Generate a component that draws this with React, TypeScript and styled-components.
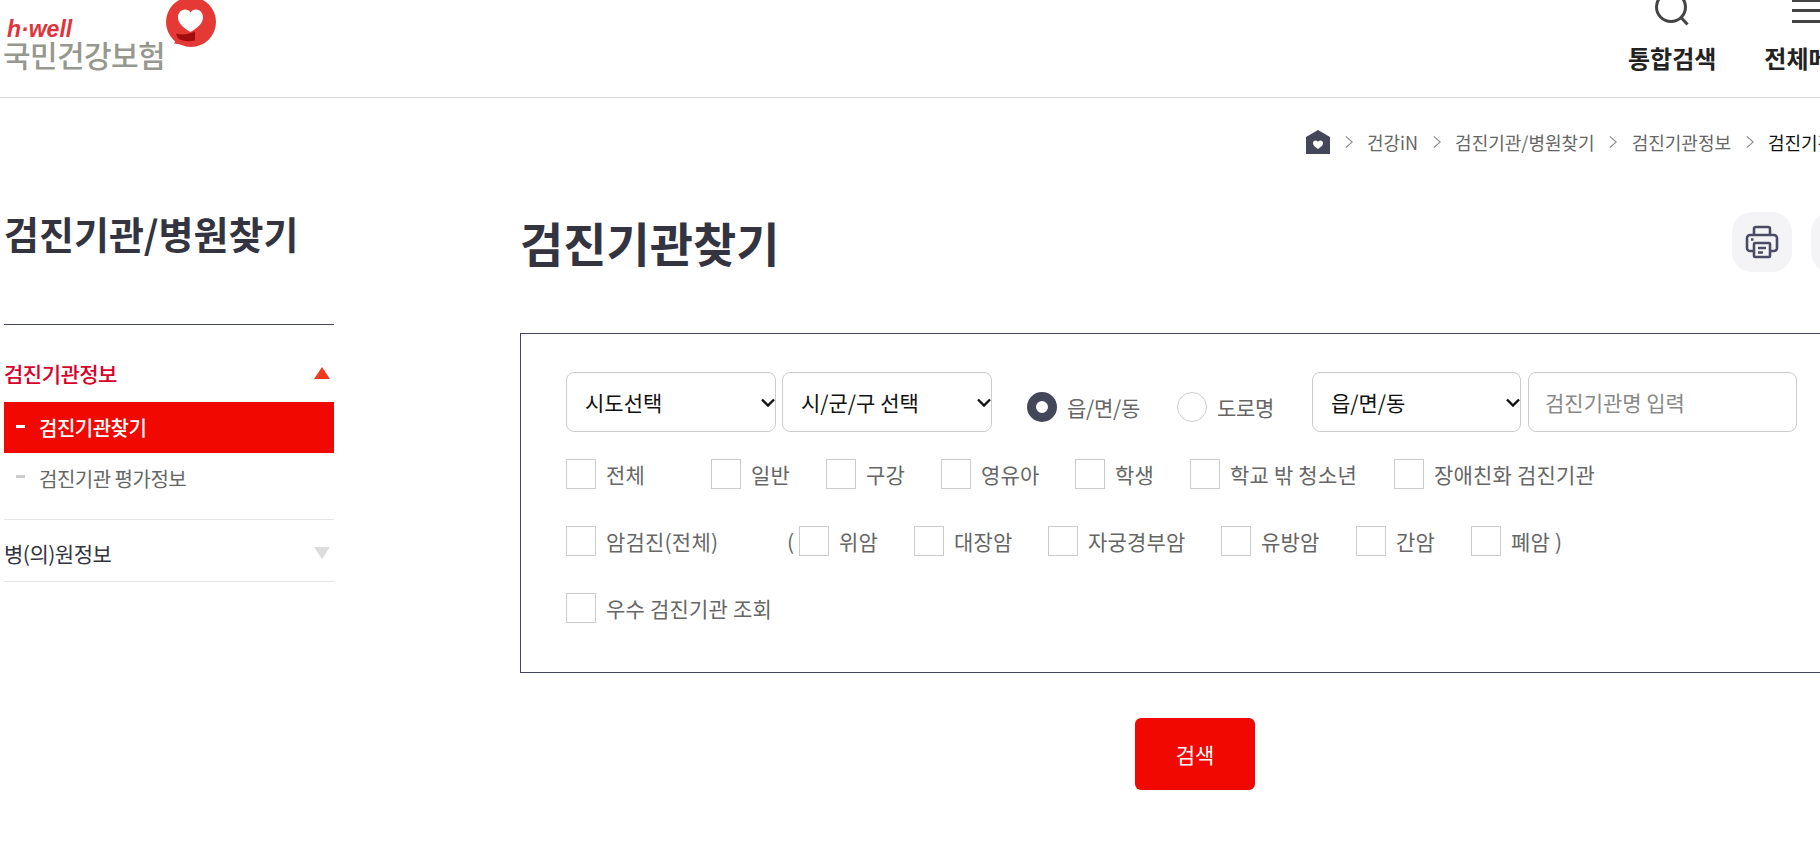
import React from "react";
import styled, { createGlobalStyle } from "styled-components";

const Global = createGlobalStyle`
  html, body {
    margin: 0;
    padding: 0;
    width: 1820px;
    height: 841px;
    overflow: hidden;
    background: #fff;
  }
  body, input, select, button {
    font-family: "Noto Sans CJK KR", "Noto Sans", sans-serif;
  }
  * {
    box-sizing: border-box;
  }
`;

const row1 = [
  { label: "전체", width: 145 },
  { label: "일반", width: 115 },
  { label: "구강", width: 115 },
  { label: "영유아", width: 134 },
  { label: "학생", width: 115 },
  { label: "학교 밖 청소년", width: 204 },
  { label: "장애친화 검진기관" },
];

const row2 = [
  { label: "위암", width: 115 },
  { label: "대장암", width: 134 },
  { label: "자궁경부암", width: 173 },
  { label: "유방암", width: 135 },
  { label: "간암", width: 115 },
  { label: "폐암 )" },
];

const crumbs = ["건강iN", "검진기관/병원찾기", "검진기관정보"];

const selectArrow =
  "data:image/svg+xml,%3Csvg xmlns='http://www.w3.org/2000/svg' width='14' height='9' fill='none' stroke='%23111' stroke-width='2.4'%3E%3Cpath d='M1 1.500l6 6 6-6'/%3E%3C/svg%3E";

const CheckOption = ({ label, width }: { label: string; width?: number }) => (
  <Option $width={width}>
    <CheckBox type="checkbox" />
    <span>{label}</span>
  </Option>
);

const App = () => {
  return (
    <Page>
      <Global />
      <Header>
        <Logo>
          <LogoEn>h·well</LogoEn>
          <LogoKo>국민건강보험</LogoKo>
          <LogoMark viewBox="0 0 50 50" aria-hidden="true">
            <circle cx="25" cy="25" r="25" fill="#e53935" />
            <path d="M13 38L8 46.500c6 1 12 1.500 18 .5z" fill="#e53935" />
            <path
              d="M24.500 35c-8-4.500-12.500-9-12.500-15 0-4.500 3.500-7.500 7-7.500 2.500 0 4.500 1 5.500 3 1-2 3-3 5.500-3 3.500 0 7 3 7 7.500 0 6-4.500 10.500-12.500 15z"
              fill="#fff"
            />
            <path d="M10 36.500c6 2 12 1 19-2v9c-7 1.500-13 .5-17-2z" fill="#a00d0d" />
          </LogoMark>
        </Logo>
        <Tools>
          <Tool>
            <ToolIcon viewBox="0 0 36 36" aria-hidden="true">
              <circle cx="17" cy="17" r="14.500" />
              <path d="M27.500 28l6 6.500" />
            </ToolIcon>
            <ToolLabel>통합검색</ToolLabel>
          </Tool>
          <Tool>
            <ToolIcon viewBox="0 0 36 36" aria-hidden="true">
              <path d="M2 10.500h32M2 20.500h32M2 31.500h32" />
            </ToolIcon>
            <ToolLabel>전체메뉴</ToolLabel>
          </Tool>
        </Tools>
      </Header>

      <Breadcrumb>
        <HomeIcon viewBox="0 0 24 24" aria-hidden="true">
          <path d="M12 0l12 7v17H0V7z" fill="#44465a" />
          <path
            d="M12 19c-3-2-5-3.500-5-6 0-1.500 1.200-2.500 2.500-2.500 1 0 2 .5 2.500 1.500.5-1 1.500-1.500 2.500-1.500 1.300 0 2.500 1 2.500 2.500 0 2.500-2 4-5 6z"
            fill="#fff"
          />
        </HomeIcon>
        {crumbs.map((crumb) => (
          <React.Fragment key={crumb}>
            <Chevron viewBox="0 0 10 16" aria-hidden="true">
              <path d="M1 1l8 7-8 7" />
            </Chevron>
            <Crumb>{crumb}</Crumb>
          </React.Fragment>
        ))}
        <Chevron viewBox="0 0 10 16" aria-hidden="true">
          <path d="M1 1l8 7-8 7" />
        </Chevron>
        <Crumb $current>검진기관찾기</Crumb>
      </Breadcrumb>

      <Body>
        <Sidebar>
          <SideTitle>검진기관/병원찾기</SideTitle>
          <SideHead $open>
            검진기관정보
            <Arrow $open />
          </SideHead>
          <SubItem $active>검진기관찾기</SubItem>
          <SubItem>검진기관 평가정보</SubItem>
          <SideHead>
            병(의)원정보
            <Arrow />
          </SideHead>
        </Sidebar>

        <Main>
          <TitleRow>
            <PageTitle>검진기관찾기</PageTitle>
            <TitleActions>
              <RoundButton type="button" aria-label="인쇄">
                <svg width="34" height="34" viewBox="0 0 34 34" fill="none" stroke="#4a4c63" strokeWidth="2.600">
                  <path d="M9 10V4a2 2 0 0 1 2-2h12a2 2 0 0 1 2 2v6" />
                  <path d="M9 26H5a3 3 0 0 1-3-3V13a3 3 0 0 1 3-3h24a3 3 0 0 1 3 3v10a3 3 0 0 1-3 3h-4" />
                  <rect x="9" y="18" width="16" height="14" rx="1" />
                  <path d="M13 23h8M13 27.500h5M6 14.500h2.500" />
                </svg>
              </RoundButton>
              <RoundButton type="button" aria-label="공유" />
            </TitleActions>
          </TitleRow>

          <Panel>
            <SearchRow>
              <SelectBox $width={210} defaultValue="시도선택">
                <option>시도선택</option>
              </SelectBox>
              <SelectBox $width={210} defaultValue="시/군/구 선택">
                <option>시/군/구 선택</option>
              </SelectBox>
              <RadioGroup>
                <RadioOption>
                  <RadioDot type="radio" name="addr" defaultChecked />
                  <span>읍/면/동</span>
                </RadioOption>
                <RadioOption>
                  <RadioDot type="radio" name="addr" />
                  <span>도로명</span>
                </RadioOption>
              </RadioGroup>
              <SelectBox $width={209} defaultValue="읍/면/동">
                <option>읍/면/동</option>
              </SelectBox>
              <NameInput type="text" placeholder="검진기관명 입력" />
            </SearchRow>

            <CheckRow>
              {row1.map((item) => (
                <CheckOption key={item.label} {...item} />
              ))}
            </CheckRow>

            <CheckRow>
              <CheckOption label="암검진(전체)" width={221} />
              <Paren>(</Paren>
              {row2.map((item) => (
                <CheckOption key={item.label} {...item} />
              ))}
            </CheckRow>

            <CheckRow>
              <CheckOption label="우수 검진기관 조회" />
            </CheckRow>
          </Panel>

          <ButtonRow>
            <SearchButton type="button">검색</SearchButton>
          </ButtonRow>
        </Main>
      </Body>
    </Page>
  );
};

export default App;

const Page = styled.div`
  width: 1820px;
  height: 841px;
  overflow: hidden;
`;

const Header = styled.header`
  display: flex;
  height: 98px;
  border-bottom: 1px solid #d8d8d8;
  overflow: hidden;
`;

const Logo = styled.div`
  position: relative;
  flex: 0 0 1628px;
  padding: 18px 0 0 3px;
`;

const LogoEn = styled.div`
  margin-left: 4px;
  font-family: "Liberation Sans", sans-serif;
  font-size: 23px;
  line-height: 22px;
  font-weight: 700;
  font-style: italic;
  color: #e0343a;
`;

const LogoKo = styled.div`
  margin-top: 0;
  font-size: 30px;
  line-height: 28px;
  font-weight: 500;
  letter-spacing: -0.600px;
  color: #96988f;
`;

const LogoMark = styled.svg`
  position: absolute;
  left: 166px;
  top: -3px;
  width: 50px;
  height: 50px;
`;

const Tools = styled.div`
  display: flex;
  flex: none;
  gap: 48px;
`;

const Tool = styled.div`
  display: flex;
  flex-direction: column;
  align-items: center;
`;

const ToolIcon = styled.svg`
  width: 36px;
  height: 36px;
  margin-top: -10px;
  fill: none;
  stroke: #444;
  stroke-width: 3;
`;

const ToolLabel = styled.div`
  margin-top: 15px;
  font-size: 24px;
  line-height: 34px;
  font-weight: 700;
  color: #222;
`;

const Breadcrumb = styled.nav`
  display: flex;
  align-items: center;
  height: 50px;
  margin-top: 19px;
  padding-left: 1306px;
  white-space: nowrap;
`;

const HomeIcon = styled.svg`
  flex: none;
  width: 24px;
  height: 24px;
`;

const Chevron = styled.svg`
  flex: none;
  width: 8px;
  height: 14px;
  margin: 0 14.500px;
  fill: none;
  stroke: #888;
  stroke-width: 1.300;
`;

const Crumb = styled.span<{ $current?: boolean }>`
  flex: none;
  font-size: 18px;
  color: ${(p) => (p.$current ? "#111" : "#666")};
`;

const Body = styled.div`
  display: flex;
  align-items: flex-start;
`;

const Sidebar = styled.aside`
  flex: 0 0 330px;
  margin-left: 4px;
`;

const SideTitle = styled.h2`
  margin: 38px 0 0;
  height: 120px;
  border-bottom: 1px solid #44465a;
  font-size: 38px;
  line-height: 56px;
  font-weight: 700;
  white-space: nowrap;
  color: #33343f;
`;

const SideHead = styled.div<{ $open?: boolean }>`
  display: flex;
  align-items: center;
  justify-content: space-between;
  height: ${(p) => (p.$open ? "77px" : "62px")};
  padding: ${(p) => (p.$open ? "18px" : "4px")} 4px 0 0;
  border-bottom: ${(p) => (p.$open ? "0" : "1px solid #e5e5e5")};
  font-size: 21px;
  font-weight: ${(p) => (p.$open ? 500 : 400)};
  letter-spacing: -0.5px;
  color: ${(p) => (p.$open ? "#d6002a" : "#33343f")};
`;

const Arrow = styled.span<{ $open?: boolean }>`
  width: 0;
  height: 0;
  border-left: 8px solid transparent;
  border-right: 8px solid transparent;
  border-bottom: ${(p) => (p.$open ? "12px solid #f03a20" : "0")};
  border-top: ${(p) => (p.$open ? "0" : "12px solid #dcdcdc")};
`;

const SubItem = styled.div<{ $active?: boolean }>`
  position: relative;
  display: flex;
  align-items: center;
  height: ${(p) => (p.$active ? "51px" : "67px")};
  padding: ${(p) => (p.$active ? "0" : "0 0 15px")};
  padding-left: 35px;
  border-bottom: ${(p) => (p.$active ? "0" : "1px solid #e5e5e5")};
  font-size: 20px;
  font-weight: ${(p) => (p.$active ? 500 : 400)};
  letter-spacing: -0.5px;
  color: ${(p) => (p.$active ? "#fff" : "#666")};
  background: ${(p) => (p.$active ? "#f10800" : "transparent")};

  &::before {
    content: "";
    position: absolute;
    left: 12px;
    top: ${(p) => (p.$active ? "23px" : "22px")};
    width: 9px;
    height: 3px;
    background: ${(p) => (p.$active ? "#fff" : "#ccc")};
  }
`;

const Main = styled.main`
  flex: none;
  width: 1350px;
  margin-left: 186px;
`;

const TitleRow = styled.div`
  display: flex;
  align-items: center;
  justify-content: space-between;
  height: 64px;
  margin-top: 43px;
`;

const PageTitle = styled.h1`
  margin: 0;
  font-size: 47px;
  line-height: 64px;
  font-weight: 700;
  color: #33343f;
`;

const TitleActions = styled.div`
  display: flex;
  gap: 19px;
  margin-right: -1px;
`;

const RoundButton = styled.button`
  display: flex;
  align-items: center;
  justify-content: center;
  flex: none;
  width: 60px;
  height: 60px;
  padding: 0;
  border: 0;
  border-radius: 20px;
  background: #f4f4f6;
`;

const Panel = styled.section`
  height: 340px;
  margin-top: 59px;
  padding: 38px 0 0 45px;
  border: 1px solid #44465a;
`;

const SearchRow = styled.div`
  display: flex;
  align-items: center;
`;

const SelectBox = styled.select<{ $width: number }>`
  appearance: none;
  flex: none;
  width: ${(p) => p.$width}px;
  height: 60px;
  margin-right: 6px;
  padding-left: 18px;
  border: 1px solid #ccc;
  border-radius: 8px;
  background: #fff url("${selectArrow}") no-repeat right 0.5px center;
  font-size: 21px;
  color: #111;
`;

const RadioGroup = styled.div`
  display: flex;
  flex: none;
  width: 314px;
  padding: 10px 0 0 29px;
`;

const RadioOption = styled.label`
  display: flex;
  align-items: center;
  flex: none;
  gap: 10px;
  width: 150px;
  font-size: 21px;
  letter-spacing: -0.3px;
  color: #666;

  &:last-child {
    width: 135px;
  }
`;

const RadioDot = styled.input`
  appearance: none;
  flex: none;
  width: 30px;
  height: 30px;
  margin: 0;
  border: 1px solid #ccc;
  border-radius: 50%;
  background: #fff;

  &:checked {
    border: 9px solid #44465a;
  }
`;

const NameInput = styled.input`
  flex: none;
  width: 269px;
  height: 60px;
  margin-left: 1px;
  padding: 0 16px;
  border: 1px solid #ccc;
  border-radius: 8px;
  font-size: 21px;

  &::placeholder {
    color: #888;
  }
`;

const CheckRow = styled.div`
  display: flex;
  align-items: center;
  height: 30px;
  margin-top: 37px;

  ${SearchRow} + & {
    margin-top: 27px;
  }
`;

const Option = styled.label<{ $width?: number }>`
  display: flex;
  align-items: center;
  flex: none;
  gap: 10px;
  width: ${(p) => (p.$width ? `${p.$width}px` : "auto")};
  font-size: 21px;
  letter-spacing: 0.2px;
  white-space: nowrap;
  color: #666;
`;

const CheckBox = styled.input`
  appearance: none;
  flex: none;
  width: 30px;
  height: 30px;
  margin: 0;
  border: 1px solid #ccc;
  background: #fff;
`;

const Paren = styled.span`
  flex: none;
  width: 12px;
  font-size: 21px;
  color: #666;
`;

const ButtonRow = styled.div`
  display: flex;
  justify-content: center;
  margin-top: 45px;
`;

const SearchButton = styled.button`
  width: 120px;
  height: 72px;
  border: 0;
  border-radius: 6px;
  background: #f10800;
  font-size: 21px;
  color: #fff;
`;
